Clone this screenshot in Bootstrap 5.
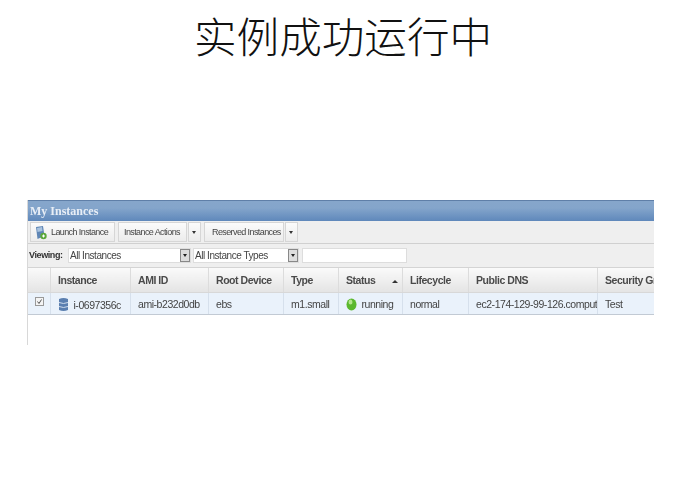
<!DOCTYPE html>
<html lang="zh">
<head>
<meta charset="utf-8">
<title>实例成功运行中</title>
<link href="https://cdn.jsdelivr.net/npm/bootstrap@5.3.0/dist/css/bootstrap.min.css" rel="stylesheet">
<style>
html,body{height:100%;overflow:hidden}
body{background:#fff;font-family:"Liberation Sans",Arial,sans-serif;color:#333;margin:0}
.slide-title{height:200px;margin:0;padding-top:9px;padding-left:194px;font-family:"Liberation Serif","Noto Sans CJK SC",serif;font-size:42.6px;line-height:60px;font-weight:300;color:#111;white-space:nowrap}
.console{width:627px;margin-left:27px;border-left:1px solid #d8d8d8;height:145px;background:#fff;overflow:hidden;filter:blur(.35px)}
.con-head{height:21px;background:linear-gradient(#86a6cb,#84a5cb 35%,#5f88bb);border-top:1px solid #5f7fa8;color:#e8eef6;font:700 12px/20px "Liberation Serif",serif;padding-left:2px}
.con-tools{height:23px;background:#efefef;border-bottom:1px solid #d0d0d0;padding:1px 2px;gap:3px}
.tool-btn{height:20px;border:1px solid #d6d6d6;background:linear-gradient(#fbfbfb,#ececec);font-size:9px;letter-spacing:-.6px;line-height:18px;padding:0 4px 0 3px;color:#444;white-space:nowrap;display:flex;align-items:center;gap:4px}
.tool-btn.main-a{width:85px}
.tool-btn.main-b{width:69px;padding-left:5px}
.tool-btn.main-c{width:80px;padding-left:7px}
.tool-caret{width:0;height:0;border-left:2.500px solid transparent;border-right:2.500px solid transparent;border-top:3px solid #333}
.btn-group-x{display:flex}
.btn-group-x .tool-btn+.tool-btn{border-left:1px solid #d6d6d6;width:13px;padding:0 3px;margin-left:1px}
.con-filter{height:24px;background:#efefef;border-bottom:1px solid #d4d4d4;padding:0 1px;font-size:10px;color:#444;white-space:nowrap}
.con-filter b{font-size:9px;letter-spacing:-.4px;margin-right:2px;color:#333;width:37px}
.fake-select{height:15px;background:#fff;border:1px solid #ddd;font-size:10px;letter-spacing:-.45px;line-height:13px;padding-left:1px;position:relative;color:#444}
.sel-a{width:123px}.sel-b{width:106px;margin-left:2px;padding-left:1px}
.sel-arrow{position:absolute;right:0;top:0;width:10px;height:13px;background:#ddd;border:1px solid #888;display:flex;align-items:center;justify-content:center}
.sel-arrow i{width:0;height:0;border-left:2.5px solid transparent;border-right:2.5px solid transparent;border-top:3px solid #222}
.fake-input{width:105px;height:15px;background:#fff;border:1px solid #ddd;margin-left:3px}
.inst-table{table-layout:fixed;width:626px;margin:0;font-size:10.5px;letter-spacing:-.45px;border-collapse:collapse}
.inst-table th,.inst-table td{padding:0 0 0 7.5px;white-space:nowrap;overflow:hidden;border-right:1px solid #dcdcdc;vertical-align:middle}
.inst-table thead th{height:24px;padding-top:3px;font-weight:700;color:#4a4a4a;background:linear-gradient(#fafafa,#e4e4e4);border-bottom:1px solid #d8d8d8}
.inst-table tbody td{height:22px;padding-top:4px;background:#eaf2fb;color:#444;border-bottom:1px solid #c2cad4;border-right-color:#d6e0ec}
.inst-table th:last-child,.inst-table td:last-child{border-right:0}
.inst-table tbody td.check-cell{padding:0 0 3px 7px}
.cell-check{width:9px;height:9px;display:block}
.row-ico{vertical-align:-3px;margin-right:2px}
.status-wrap{display:flex;justify-content:space-between;align-items:center;padding-right:4px}
.sort-up{width:0;height:0;border-left:3px solid transparent;border-right:3px solid transparent;border-bottom:3px solid #333}
</style>
</head>
<body>
<h1 class="slide-title">实例成功运行中</h1>
<div class="console">
  <div class="con-head">My Instances</div>
  <div class="con-tools d-flex align-items-center">
    <div class="tool-btn main-a">
      <svg width="13" height="15" viewBox="0 0 13 15"><path d="M2 2l7-1 1.500 10-7 3z" fill="#5f86b5"/><path d="M3 3l5-1 .5 4-5 1z" fill="#a9c3df"/><circle cx="9.500" cy="11" r="3.200" fill="#5aa83a"/><path d="M8 11h3M9.500 9.500v3" stroke="#fff" stroke-width="1"/></svg>
      <span>Launch Instance</span>
    </div>
    <div class="btn-group-x">
      <div class="tool-btn main-b">Instance Actions</div>
      <div class="tool-btn"><span class="tool-caret"></span></div>
    </div>
    <div class="btn-group-x">
      <div class="tool-btn main-c">Reserved Instances</div>
      <div class="tool-btn"><span class="tool-caret"></span></div>
    </div>
  </div>
  <div class="con-filter d-flex align-items-center">
    <b>Viewing:</b>
    <div class="fake-select sel-a">All Instances<span class="sel-arrow"><i></i></span></div>
    <div class="fake-select sel-b">All Instance Types<span class="sel-arrow"><i></i></span></div>
    <div class="fake-input"></div>
  </div>
  <table class="inst-table">
    <colgroup><col style="width:22px"><col style="width:80px"><col style="width:78px"><col style="width:75px"><col style="width:55px"><col style="width:64px"><col style="width:66px"><col style="width:129px"><col style="width:57px"></colgroup>
    <thead>
      <tr>
        <th></th><th>Instance</th><th>AMI ID</th><th>Root Device</th><th>Type</th>
        <th><div class="status-wrap">Status<span class="sort-up"></span></div></th>
        <th>Lifecycle</th><th>Public DNS</th><th>Security Groups</th>
      </tr>
    </thead>
    <tbody>
      <tr>
        <td class="check-cell"><svg class="cell-check" viewBox="0 0 9 9"><rect x=".5" y=".5" width="8" height="8" fill="#f4f4f4" stroke="#999"/><path d="M2.500 4.500l1.500 2 2.500-4" fill="none" stroke="#555"/></svg></td>
        <td><svg class="row-ico" width="11" height="15" viewBox="0 0 11 15"><path d="M1 2q4.500-2 9 0v11q-4.500 2-9 0z" fill="#5b7fb0"/><path d="M1 5.500q4.500 2 9 0M1 9.500q4.500 2 9 0" stroke="#cfdcec" fill="none"/></svg> i-0697356c</td>
        <td>ami-b232d0db</td><td>ebs</td><td>m1.small</td>
        <td><svg class="row-ico" width="11" height="13" viewBox="0 0 11 13"><ellipse cx="5.500" cy="6.500" rx="5" ry="6" fill="#5cb82e"/><ellipse cx="4.500" cy="4" rx="2" ry="2.500" fill="#b5e68e"/></svg> running</td>
        <td>normal</td><td>ec2-174-129-99-126.compute-1</td><td>Test</td>
      </tr>
    </tbody>
  </table>
</div>
</body>
</html>
